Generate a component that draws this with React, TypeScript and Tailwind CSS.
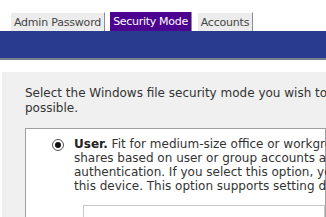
import React from 'react';

const font = { fontFamily: '"DejaVu Sans", Verdana, sans-serif' };

function Tab({ label, active, w }: { label: string; active?: boolean; w: string }) {
    return (
        <div
            className={`${w} h-[19px] flex items-center justify-center text-[11px] leading-none whitespace-nowrap border-r border-r-[#8c8c8c] ${
                active
                    ? 'bg-[#4b0390] text-white tracking-[-0.3px]'
                    : 'bg-[#ececec] text-[#444] border-t border-l border-t-white border-l-white tracking-[-0.2px]'
            }`}
        >
            {label}
        </div>
    );
}

export default function App() {
    return (
        <div className="w-[326px] h-[217px] overflow-hidden bg-white" style={font}>
            {/* Tabs */}
            <div className="flex items-end gap-[5px] pl-[10px] pt-[12px]">
                <Tab label="Admin Password" w="w-[95px]" />
                <Tab label="Security Mode" active w="w-[82px]" />
                <Tab label="Accounts" w="w-[56px]" />
            </div>
            {/* Blue band */}
            <div className="h-[29px] bg-[#283b8f] border-b-2 border-b-[#7a7f8e]" />

            {/* Content panel */}
            <div className="mt-[12px] ml-[2px] bg-[#f0f0f0] pl-[23px] pt-[14px] h-[200px]">
                <p className="text-[12px] leading-[15px] text-[#333] whitespace-nowrap">
                    Select the Windows file security mode you wish to use. Only one option is
                    <br />
                    possible.
                </p>
                <div className="mt-[12px] bg-white border border-[#a0a0a0] pt-[8px] pl-[26px] h-[120px]">
                    <div className="flex gap-[10px]">
                        <span className="mt-[2px] w-[12px] h-[12px] shrink-0 rounded-full border border-[#555] flex items-center justify-center">
                            <span className="w-[6px] h-[6px] rounded-full bg-[#111]" />
                        </span>
                        <p className="text-[12px] leading-[14px] text-[#333] whitespace-nowrap">
                            <b className="text-[#222]">User.</b> Fit for medium-size office or workgroup environments.
                            <br />
                            shares based on user or group accounts and passwords with
                            <br />
                            authentication. If you select this option, you must create
                            <br />
                            this device. This option supports setting disk quotas.
                        </p>
                    </div>
                    <div className="mt-[12px] ml-[31px] h-[40px] border border-[#c8c8c8]" />
                </div>
            </div>
        </div>
    );
}
